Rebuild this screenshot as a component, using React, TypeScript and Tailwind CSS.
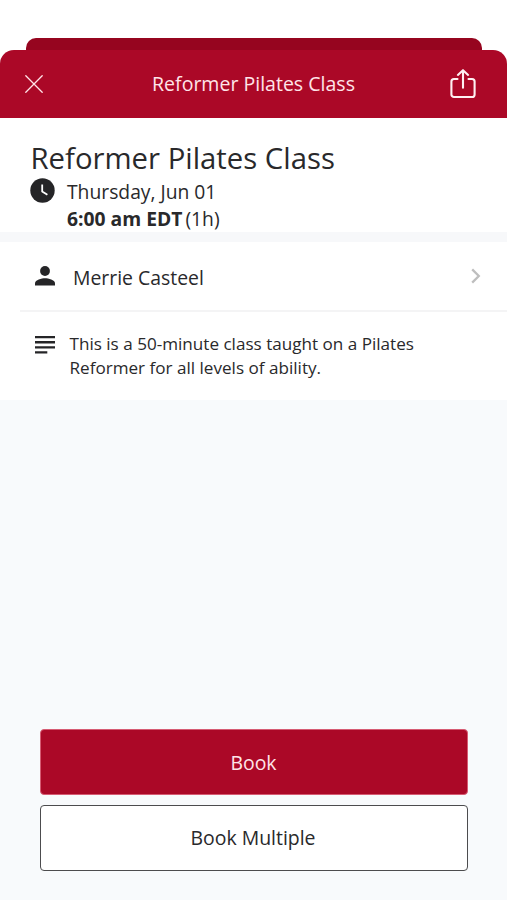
import React from "react";

function CloseIcon() {
  return (
    <svg width="18" height="18" viewBox="0 0 18 18" fill="none" stroke="#ffe4e8" strokeWidth="1.3" strokeLinecap="round">
      <path d="M.8.8 17.2 17.2M17.2.8.8 17.2" />
    </svg>
  );
}

function ShareIcon() {
  return (
    <svg width="26" height="30" viewBox="0 0 26 30" fill="none" stroke="#fff0f2" strokeWidth="2.1" strokeLinecap="round" strokeLinejoin="round">
      <path d="M7.500 10H4a2.600 2.600 0 0 0-2.600 2.600v12.800A2.600 2.600 0 0 0 4 28h18a2.600 2.600 0 0 0 2.600-2.600V12.600A2.600 2.600 0 0 0 22 10h-3.500" />
      <path d="M13 18.800V1.200M7.900 5.900 13 1.200l5.100 4.700" />
    </svg>
  );
}

function ClockIcon() {
  return (
    <svg width="25" height="25" viewBox="0 0 25 25" fill="none">
      <circle cx="12.500" cy="12.500" r="12.200" fill="#252527" />
      <path d="M12.200 6.500v7l5.200 3.200" stroke="#fff" strokeWidth="1.800" />
    </svg>
  );
}

function PersonIcon() {
  return (
    <svg width="20" height="20" viewBox="0 0 20 20" fill="#252527">
      <circle cx="10" cy="5" r="4.900" />
      <path d="M0 19.500v-2.300c0-3.300 6.700-5 10-5s10 1.700 10 5v2.300z" />
    </svg>
  );
}

function NotesIcon() {
  return (
    <svg width="20" height="18" viewBox="0 0 20 18" fill="#252527">
      <path d="M0 0h20v2.300H0zM0 5.100h20v2.300H0zM0 10.200h20v2.300H0zM0 15.300h12.300v2.300H0z" />
    </svg>
  );
}

function ChevronIcon() {
  return (
    <svg width="10" height="16" viewBox="0 0 10 16" fill="none" stroke="#bebebe" strokeWidth="2.300">
      <path d="m1.200 1.400 6.600 6.600-6.600 6.600" />
    </svg>
  );
}

export default function App() {
  return (
    <div className="flex h-[900px] w-[507px] flex-col overflow-hidden bg-white font-['Open_Sans',sans-serif] whitespace-nowrap text-[#29292b]">
      <div className="mt-[38px] ml-[26px] h-3 w-[456px] shrink-0 rounded-t-[10px] bg-[#96051f]" />
      <header className="flex h-[68px] shrink-0 items-center justify-between rounded-t-[14px] bg-[#ab0827] pr-[31px] pl-[25px]">
        <button aria-label="Close"><CloseIcon /></button>
        <span className="pb-px pl-[14px] text-[19.55px] leading-7 text-[#ffe4e8]">Reformer Pilates Class</span>
        <button aria-label="Share"><ShareIcon /></button>
      </header>

      <section className="h-[114px] shrink-0 pt-[21px] pl-[30px]">
        <h1 className="pl-[0.5px] text-[29.3px] leading-[38px]">Reformer Pilates Class</h1>
        <div className="flex">
          <div className="mt-px w-[37px]"><ClockIcon /></div>
          <div className="text-[19.3px] leading-[27px]">
            <p className="pt-px">Thursday, Jun 01</p>
            <p><b className="font-bold">6:00 am EDT</b><span className="ml-[3px]">(1h)</span></p>
          </div>
        </div>
      </section>
      <div className="h-[10px] shrink-0 bg-[#f7f8fa]" />

      <section className="flex h-[68px] shrink-0 items-center pr-[26px] pl-[35px]">
        <PersonIcon />
        <span className="ml-[18px] flex-1 pt-[3px] text-[19.4px]">Merrie Casteel</span>
        <ChevronIcon />
      </section>
      <div className="ml-5 h-[2px] shrink-0 bg-[#f4f4f5]" />
      <section className="flex h-[88px] shrink-0 pt-[19px] pl-[35px]">
        <div className="mt-[5px]"><NotesIcon /></div>
        <p className="ml-[14.500px] pt-[0.500px] text-[17.1px] leading-[24.5px]">This is a 50-minute class taught on a Pilates<br />Reformer for all levels of ability.</p>
      </section>

      <main className="flex flex-1 flex-col justify-end gap-[10px] bg-[#f8fafc] pr-[39px] pb-[29px] pl-10 text-[19.45px]">
        <button className="h-[66px] rounded-[4px] border border-[#d65b73] bg-[#ab0827] pt-px pr-px text-[#ffe4e8]">Book</button>
        <button className="h-[66px] rounded-[4px] border border-[#4c4c4e] bg-white pr-[2px]">Book Multiple</button>
      </main>
    </div>
  );
}
